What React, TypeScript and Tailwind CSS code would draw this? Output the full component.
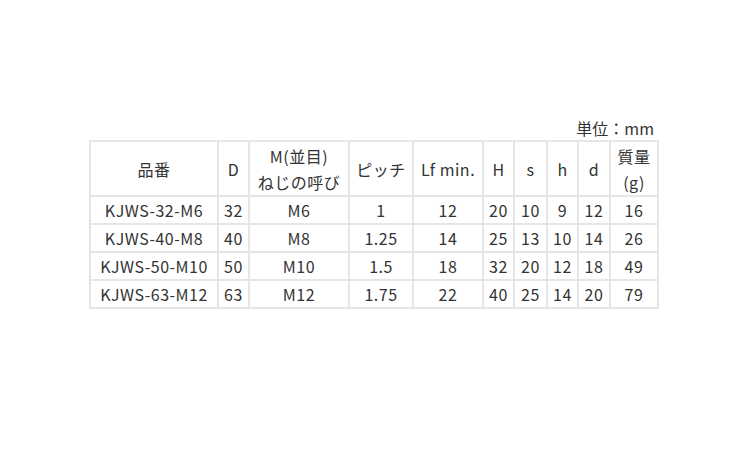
const headers = [
  { label: ["品番"], w: "w-[128px]" },
  { label: ["D"], w: "w-[31px]" },
  { label: ["M(並目)", "ねじの呼び"], w: "w-[100px]" },
  { label: ["ピッチ"], w: "w-[64px]" },
  { label: ["Lf min."], w: "w-[70px]" },
  { label: ["H"], w: "w-[31px]" },
  { label: ["s"], w: "w-[33px]" },
  { label: ["h"], w: "w-[31px]" },
  { label: ["d"], w: "w-[32px]" },
  { label: ["質量", "(g)"], w: "w-[48px]" },
];

const rows = [
  ["KJWS-32-M6", "32", "M6", "1", "12", "20", "10", "9", "12", "16"],
  ["KJWS-40-M8", "40", "M8", "1.25", "14", "25", "13", "10", "14", "26"],
  ["KJWS-50-M10", "50", "M10", "1.5", "18", "32", "20", "12", "18", "49"],
  ["KJWS-63-M12", "63", "M12", "1.75", "22", "40", "25", "14", "20", "79"],
];

export default function App() {
  return (
    <div
      className="w-[750px] h-[450px] bg-white text-[#333] pt-[116px] pl-[89px]"
      style={{ fontFamily: '"Noto Sans CJK JP", "Noto Sans", sans-serif' }}
    >
      <div className="w-[568px]">
        <div className="text-right text-[16px] leading-[24px] pr-[3px]">単位：mm</div>
        <table className="table-fixed w-[568px] border-collapse text-[16px] tracking-[0.5px]">
          <thead>
            <tr>
              {headers.map((h, i) => (
                <th
                  key={i}
                  className={`${h.w} border-2 border-[#e6e6e6] font-normal text-center leading-[26px] h-[55px] p-0`}
                >
                  {h.label.map((l, j) => (
                    <div key={j}>{l}</div>
                  ))}
                </th>
              ))}
            </tr>
          </thead>
          <tbody>
            {rows.map((r, i) => (
              <tr key={i}>
                {r.map((c, j) => (
                  <td
                    key={j}
                    className="border-2 border-[#e6e6e6] text-center leading-[26px] h-[28px] p-0"
                  >
                    {c}
                  </td>
                ))}
              </tr>
            ))}
          </tbody>
        </table>
      </div>
    </div>
  );
}
